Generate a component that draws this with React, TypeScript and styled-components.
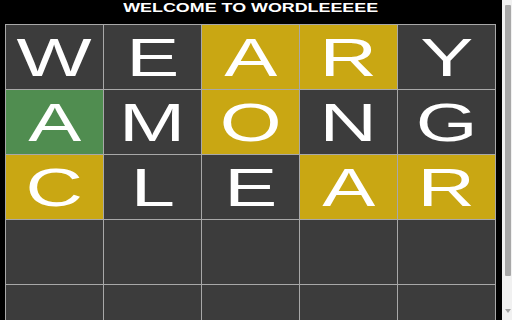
import React from 'react';
import styled, { createGlobalStyle } from 'styled-components';

type Tone = 'absent' | 'present' | 'correct' | 'empty';

const GUESSES: { letter: string; tone: Tone }[][] = [
    [
        { letter: 'W', tone: 'absent' },
        { letter: 'E', tone: 'absent' },
        { letter: 'A', tone: 'present' },
        { letter: 'R', tone: 'present' },
        { letter: 'Y', tone: 'absent' },
    ],
    [
        { letter: 'A', tone: 'correct' },
        { letter: 'M', tone: 'absent' },
        { letter: 'O', tone: 'present' },
        { letter: 'N', tone: 'absent' },
        { letter: 'G', tone: 'absent' },
    ],
    [
        { letter: 'C', tone: 'present' },
        { letter: 'L', tone: 'absent' },
        { letter: 'E', tone: 'absent' },
        { letter: 'A', tone: 'present' },
        { letter: 'R', tone: 'present' },
    ],
];

const ROWS = 6;

const toneColor: Record<Tone, string> = {
    absent: '#3c3c3c',
    empty: '#3c3c3c',
    present: '#c9a713',
    correct: '#508d50',
};

const App: React.FC = () => {
    const rows = Array.from({ length: ROWS }, (_, i) =>
        GUESSES[i] ?? Array.from({ length: 5 }, () => ({ letter: '', tone: 'empty' as Tone })),
    );

    return (
        <>
            <GlobalStyle />
            <Page>
                <Main>
                    <Title>
                        <TitleText>WELCOME TO WORDLEEEEE</TitleText>
                    </Title>
                    <Board>
                        {rows.map((row, r) =>
                            row.map((tile, c) => (
                                <Tile key={`${r}-${c}`} $tone={tile.tone}>
                                    <Letter>{tile.letter}</Letter>
                                </Tile>
                            )),
                        )}
                    </Board>
                </Main>
                <ScrollBar>
                    <Thumb />
                    <ArrowDown />
                </ScrollBar>
            </Page>
        </>
    );
};

const GlobalStyle = createGlobalStyle`
    html, body {
        margin: 0;
        padding: 0;
        background: #000;
        overflow: hidden;
    }
`;

const Page = styled.div`
    display: flex;
    height: 320px;
    background: #000;
    overflow: hidden;
`;

const Main = styled.div`
    flex: 1;
    display: flex;
    flex-direction: column;
    padding-left: 5px;
    padding-right: 6px;
`;

const Title = styled.div`
    height: 24px;
    width: 491px;
    display: flex;
    justify-content: center;
    flex-shrink: 0;
`;

const TitleText = styled.h1`
    margin: 0;
    color: #fff;
    font-family: 'Liberation Sans', Arial, sans-serif;
    font-weight: 700;
    font-size: 13px;
    line-height: 16px;
    white-space: nowrap;
    transform: scaleX(1.375);
`;

const Board = styled.div`
    display: grid;
    width: 491px;
    grid-template-columns: repeat(5, 1fr);
    grid-auto-rows: 64px;
    gap: 1px;
    padding: 1px;
    box-sizing: border-box;
    background: #a8a8a8;
    flex-shrink: 0;
`;

const Tile = styled.div<{ $tone: Tone }>`
    display: flex;
    align-items: center;
    justify-content: center;
    background: ${(props) => toneColor[props.$tone]};
`;

const Letter = styled.span`
    color: #fff;
    font-family: 'Liberation Sans', Arial, sans-serif;
    font-size: 53px;
    line-height: 1;
    transform: scaleX(1.5);
`;

const ScrollBar = styled.div`
    width: 10px;
    flex-shrink: 0;
    display: flex;
    flex-direction: column;
    align-items: center;
    background: #f1f1f1;
    padding: 5px 0 7px 1px;
    box-sizing: border-box;
`;

const Thumb = styled.div`
    width: 6px;
    height: 271px;
    background: #a8a8a8;
    border-radius: 1px;
`;

const ArrowDown = styled.div`
    margin-top: auto;
    width: 0;
    height: 0;
    border-left: 3px solid transparent;
    border-right: 3px solid transparent;
    border-top: 4px solid #a3a3a3;
`;

export default App;
